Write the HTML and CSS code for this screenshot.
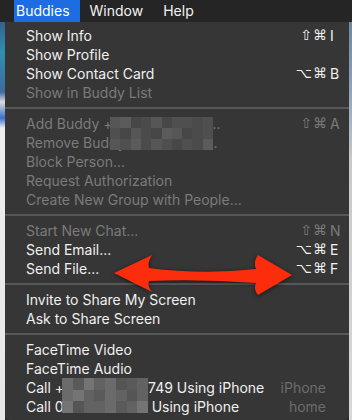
FILE: index.html
```html
<!DOCTYPE html>
<html lang="en">
<head>
    <meta charset="UTF-8">
    <meta name="viewport" content="width=device-width, initial-scale=1.0">
    <title>Buddies menu</title>
    <link rel="stylesheet" href="styles.css">
</head>
<body>
    <div class="screen">
        <header class="menubar">
            <span class="mb-item active">Buddies</span>
            <span class="mb-item">Window</span>
            <span class="mb-item">Help</span>
        </header>

        <div class="desk">
            <div class="edge edge-left"></div>

            <nav class="menu">
                <div class="row"><span class="label">Show Info</span><span class="keys"><span class="mods">⇧⌘</span><span class="key">I</span></span></div>
                <div class="row"><span class="label">Show Profile</span></div>
                <div class="row"><span class="label">Show Contact Card</span><span class="keys"><span class="mods">⌥⌘</span><span class="key">B</span></span></div>
                <div class="row off"><span class="label">Show in Buddy List</span></div>
                <div class="sep"></div>

                <div class="row off"><span class="label">Add Buddy +<span class="gap-a"></span>..</span><span class="keys"><span class="mods">⇧⌘</span><span class="key">A</span></span></div>
                <div class="row off"><span class="label">Remove Buddy<span class="gap-b"></span>..</span></div>
                <div class="row off"><span class="label">Block Person...</span></div>
                <div class="row off"><span class="label">Request Authorization</span></div>
                <div class="row off"><span class="label">Create New Group with People...</span></div>
                <div class="sep"></div>

                <div class="row off"><span class="label">Start New Chat...</span><span class="keys"><span class="mods">⇧⌘</span><span class="key">N</span></span></div>
                <div class="row"><span class="label">Send Email...</span><span class="keys"><span class="mods">⌥⌘</span><span class="key">E</span></span></div>
                <div class="row"><span class="label">Send File...</span><span class="keys"><span class="mods">⌥⌘</span><span class="key">F</span></span></div>
                <div class="sep"></div>

                <div class="row"><span class="label">Invite to Share My Screen</span></div>
                <div class="row"><span class="label">Ask to Share Screen</span></div>
                <div class="sep"></div>

                <div class="row"><span class="label">FaceTime Video</span></div>
                <div class="row"><span class="label">FaceTime Audio</span></div>
                <div class="row"><span class="label">Call +<span class="gap-c"></span>749 Using iPhone</span><span class="note">iPhone</span></div>
                <div class="row"><span class="label">Call 0<span class="gap-d"></span>Using iPhone</span><span class="note">home</span></div>

                <!-- pixelated bits hiding the contact details -->
                <div class="mosaic mosaic-top">
                    <span></span><span></span><span></span><span></span><span></span><span></span><span></span><span></span><span></span><span></span>
                    <span></span><span></span><span></span><span></span><span></span><span></span><span></span><span></span><span></span><span></span>
                    <span></span><span></span><span></span><span></span><span></span><span></span><span></span><span></span><span></span><span></span>
                </div>
                <div class="mosaic mosaic-bottom">
                    <span></span><span></span><span></span><span></span><span></span><span></span><span></span><span></span>
                    <span></span><span></span><span></span><span></span><span></span><span></span><span></span><span></span>
                    <span></span><span></span><span></span><span></span><span></span><span></span><span></span><span></span>
                </div>
            </nav>

            <div class="edge edge-right"></div>
        </div>

        <svg class="arrow" width="190" height="50" viewBox="0 0 190 50">
            <path d="M4 23 L42 5 Q37 13 39 18 Q92 25 146 19 Q143 12 148 5 L182 25 L148 45 Q143 39 146 33 Q92 29 39 31 Q37 36 42 42 Z" fill="#fb2d0c"/>
        </svg>
    </div>
</body>
</html>
```

FILE: styles.css
```css
body {
    margin: 0;
    padding: 0;
    background: #2a2a2a;
    font-family: 'Inter', 'Liberation Sans', sans-serif;
    font-size: 14px;
}

.screen {
    position: relative;
    width: 352px;
    height: 420px;
    overflow: hidden;
    display: flex;
    flex-direction: column;
}

.menubar {
    height: 22px;
    display: flex;
    padding-left: 14px;
    background: #252525;
    color: #f2f2f2;
    line-height: 21px;
}

.mb-item {
    padding: 0 10px;
}

.mb-item.active {
    padding-left: 2px;
    background: #1c6ce2;
    color: #fff;
}

.desk {
    flex: 1;
    display: flex;
}

.edge-left {
    width: 5px;
    background: linear-gradient(to bottom, #35608c 0, #2f8fb0 30px, #3e6ba2 70px, #dcdcdc 80px, #3a6fcc 96px, #eeeeee 106px, #e6e6e6 100%);
}

.edge-right {
    width: 3px;
    background: linear-gradient(to bottom, #6f86a0 0, #8aa0b6 60px, #c9c9c9 140px, #d8d8d8 100%);
}

.menu {
    position: relative;
    flex: 1;
    padding: 4px 0;
    background: #363636;
    color: #f0f0f0;
    border-radius: 0 0 5px 5px;
}

.row {
    height: 19px;
    display: flex;
    align-items: center;
    justify-content: space-between;
    padding: 0 8px 0 21px;
    white-space: nowrap;
}

.row.off {
    color: #7b7b7b;
}

.keys {
    display: flex;
}

.mods {
    font-family: 'DejaVu Sans', sans-serif;
    font-size: 14px;
    letter-spacing: 1px;
}

.key {
    width: 11px;
    padding-left: 2px;
}

.note {
    padding-right: 15px;
    color: #6c6c6c;
}

.sep {
    height: 2px;
    margin: 5px 0;
    background: #575757;
}

.gap-a {
    display: inline-block;
    width: 100px;
}

.gap-b {
    display: inline-block;
    width: 84px;
}

.gap-c {
    display: inline-block;
    width: 84px;
}

.gap-d {
    display: inline-block;
    width: 88px;
}

.mosaic {
    position: absolute;
    display: grid;
}

.mosaic-top {
    left: 105px;
    top: 95px;
    width: 103px;
    height: 33px;
    grid-template-columns: repeat(10, 1fr);
}

.mosaic-top span {
    background: #4f4f4f;
}

.mosaic-top span:nth-child(3n) { background: #474747; }
.mosaic-top span:nth-child(4n+1) { background: #565656; }
.mosaic-top span:nth-child(7n+2) { background: #5b5b5b; }
.mosaic-top span:nth-child(5n+4) { background: #4b4b4b; }

.mosaic-bottom {
    left: 57px;
    top: 356px;
    width: 86px;
    height: 35px;
    grid-template-columns: repeat(8, 1fr);
}

.mosaic-bottom span {
    background: #626262;
}

.mosaic-bottom span:nth-child(3n) { background: #555555; }
.mosaic-bottom span:nth-child(4n+1) { background: #6b6b6b; }
.mosaic-bottom span:nth-child(5n+2) { background: #5a5a5a; }
.mosaic-bottom span:nth-child(7n+3) { background: #747474; }

.arrow {
    position: absolute;
    left: 110px;
    top: 250px;
    filter: drop-shadow(0 1px 2px rgba(0, 0, 0, 0.6));
}
```
